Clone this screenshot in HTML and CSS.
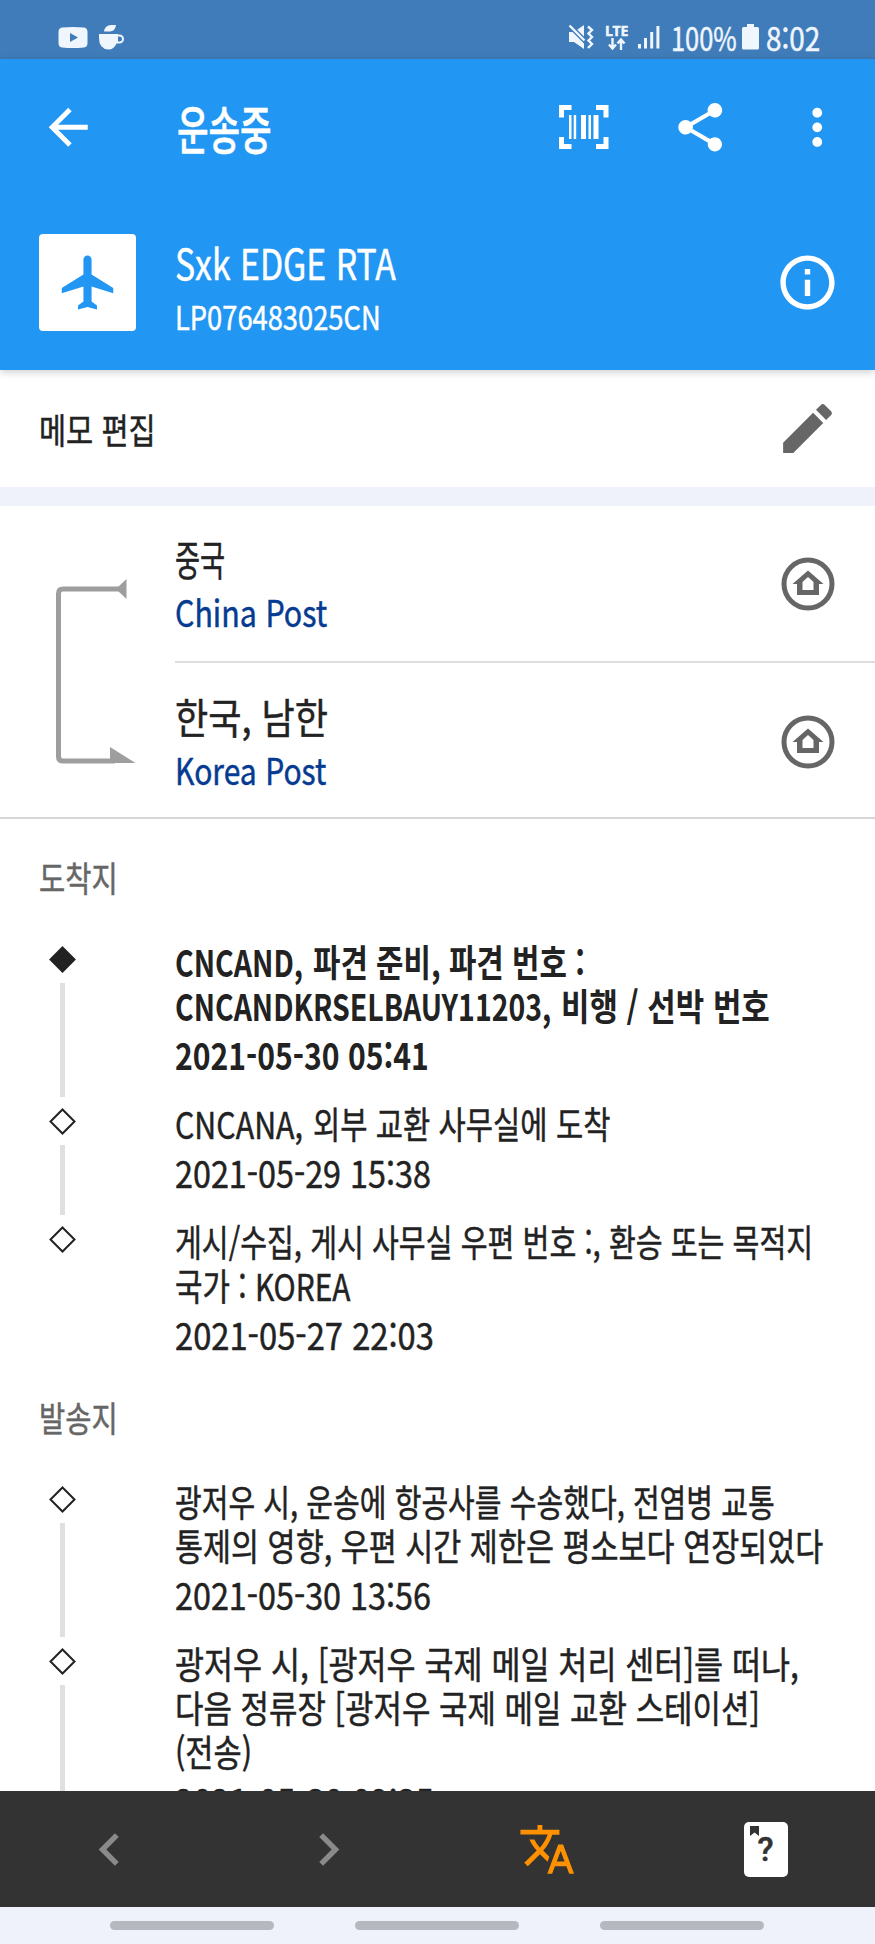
FILE: index.html
```
<!DOCTYPE html>
<html lang="ko">
<head>
    <meta charset="UTF-8">
    <meta name="viewport" content="width=device-width, initial-scale=1.0">
    <title>운송중</title>
    <link rel="stylesheet" href="styles.css">
</head>
<body>
    <!-- Status bar -->
    <div class="status-bar">
        <div class="status-left">
            <svg width="30" height="21" viewBox="0 0 30 21"><path fill-rule="evenodd" d="M4 .5Q15-.5 26 .5 29.500 1 29.500 5V16Q29.500 20 26 20.500 15 21.500 4 20.500 .5 20 .5 16V5Q.5 1 4 .5zM12 6v9l8-4.500z"/></svg>
            <svg width="26" height="25" viewBox="0 0 26 25"><path fill-rule="evenodd" d="M0 9h19v.5h1.500a4.300 4.300 0 0 1 0 9h-3Q15 24.500 9.500 24.500 0 24 0 13zM19 11.500v5h1.500a2.300 2.300 0 0 0 0-5z"/><path d="M5 6.500Q6 0 12 0h5Q16 6.500 11 6.500z"/></svg>
        </div>
        <div class="status-right">
            <svg class="mute" width="26" height="26" viewBox="0 0 26 26"><path d="M1 8h5l10-7v24L6 18H1z"/><path class="mute-gap" d="M0 0l18 18"/><path class="mute-line" d="M1.500 1.500l15 15M20 2.500l4 3.500-3.500 3.500L24 13l-3.500 3.500L24 20l-4 4"/></svg>
            <div class="lte">
                <span>LTE</span>
                <svg width="18" height="12" viewBox="0 0 18 12"><path class="lte-arrows" d="M4.500 0v10M1 6.500l3.500 4 3.500-4M13 12V2M9.500 5.500l3.500-4 3.500 4"/></svg>
            </div>
            <svg class="signal" width="22" height="24" viewBox="0 0 22 24"><path d="M0 19h3v4.500H0zM6 13h3v10.500H6zM12.200 7h3v16.500h-3zM18.400 1h3v22.500h-3z"/></svg>
            <div class="slot battery-text"><span class="fit" data-width="66">100%</span></div>
            <svg class="battery" width="17" height="26" viewBox="0 0 17 26"><path d="M5 0h7v3h3.500a1.500 1.500 0 0 1 1.500 1.500V24a1.500 1.500 0 0 1-1.500 1.500h-14A1.500 1.500 0 0 1 0 24V4.500A1.500 1.500 0 0 1 1.500 3H5z"/></svg>
            <div class="slot clock"><span class="fit" data-width="54">8:02</span></div>
        </div>
    </div>

    <!-- Header -->
    <header class="header">
        <div class="toolbar">
            <svg class="back" width="58.500" height="58.500" viewBox="0 0 24 24"><path d="M20 11H7.830l5.590-5.590L12 4l-8 8 8 8 1.410-1.410L7.830 13H20v-2z"/></svg>
            <h1><span class="fit" data-width="95">운송중</span></h1>
            <div class="actions">
                <svg width="50" height="44" viewBox="0 0 50 44"><path d="M0 0h12.500v5H5v7.500H0zM37 0h12.500v12.500h-5V5H37zM0 32h5v7h7.500v5H0zM44.500 32h5v12H37v-5h7.500zM10 10h2.500v24H10zM14.700 10h2.500v24h-2.500zM22 10h5v24h-5zM29.500 10H32v24h-2.500zM34.500 10h5v24h-5z"/></svg>
                <svg width="58.500" height="58.500" viewBox="0 0 24 24"><path d="M18 16.080c-.76 0-1.440.3-1.960.77L8.910 12.700c.05-.23.09-.46.09-.7s-.04-.47-.09-.7l7.050-4.110c.54.5 1.250.81 2.040.81 1.660 0 3-1.340 3-3s-1.340-3-3-3-3 1.340-3 3c0 .24.04.47.09.7L8.040 9.810C7.500 9.310 6.790 9 6 9c-1.660 0-3 1.340-3 3s1.340 3 3 3c.79 0 1.500-.31 2.040-.81l7.120 4.160c-.05.21-.08.43-.08.65 0 1.610 1.310 2.920 2.920 2.920s2.920-1.310 2.920-2.920-1.310-2.920-2.920-2.920z"/></svg>
                <svg width="58.500" height="58.500" viewBox="0 0 24 24"><path d="M12 8c1.100 0 2-.9 2-2s-.9-2-2-2-2 .9-2 2 .9 2 2 2zm0 2c-1.100 0-2 .9-2 2s.9 2 2 2 2-.9 2-2-.9-2-2-2zm0 6c-1.100 0-2 .9-2 2s.9 2 2 2 2-.9 2-2-.9-2-2-2z"/></svg>
            </div>
        </div>
        <div class="parcel">
            <div class="parcel-icon">
                <svg width="65" height="65" viewBox="0 0 24 24"><path d="M21.500 16v-2l-8-5V3.500c0-.83-.67-1.500-1.500-1.500s-1.500.67-1.500 1.500V9l-8 5v2l8-2.500V19l-2 1.500V22l3.500-1 3.500 1v-1.500L13.500 19v-5.500z"/></svg>
            </div>
            <div class="parcel-text">
                <div class="parcel-name"><span class="fit" data-width="221">Sxk EDGE RTA</span></div>
                <div class="parcel-code"><span class="fit" data-width="206">LP076483025CN</span></div>
            </div>
            <svg width="65" height="65" viewBox="0 0 24 24"><path d="M11 7h2v2h-2zm0 4h2v6h-2zm1-9C6.480 2 2 6.480 2 12s4.480 10 10 10 10-4.480 10-10S17.520 2 12 2zm0 18c-4.410 0-8-3.590-8-8s3.590-8 8-8 8 3.590 8 8-3.590 8-8 8z"/></svg>
        </div>
    </header>

    <!-- Memo -->
    <div class="memo">
        <span class="fit" data-width="117">메모 편집</span>
        <svg width="65" height="65" viewBox="0 0 24 24"><path d="M3 17.250V21h3.750L17.810 9.940l-3.750-3.750L3 17.250zM20.710 7.040c.39-.39.39-1.020 0-1.410l-2.340-2.340c-.39-.39-1.020-.39-1.410 0l-1.830 1.830 3.750 3.750 1.830-1.830z"/></svg>
    </div>

    <!-- Route -->
    <div class="route">
        <svg class="route-line" width="175" height="311" viewBox="0 0 175 311"><path class="route-stroke" d="M121 83H63q-4.500 0-4.500 4.500v163q0 4.500 4.500 4.500h52"/><path d="M118 81l8.500-8v20l-8.500-8zM110 241l25.500 16H110z"/></svg>
        <div class="route-rows">
            <div class="route-row">
                <div class="route-text">
                    <div class="country"><span class="fit" data-width="50">중국</span></div>
                    <div class="carrier"><span class="fit" data-width="152">China Post</span></div>
                </div>
                <svg width="54" height="54" viewBox="0 0 54 54"><circle class="ring" cx="27" cy="27" r="24"/><path fill-rule="evenodd" d="M27 13.500L42.500 27H38v11H16V27h-4.500zM27 20l-5.500 5v8h11v-8z"/></svg>
            </div>
            <div class="route-row">
                <div class="route-text">
                    <div class="country"><span class="fit" data-width="153">한국, 남한</span></div>
                    <div class="carrier"><span class="fit" data-width="151">Korea Post</span></div>
                </div>
                <svg width="54" height="54" viewBox="0 0 54 54"><circle class="ring" cx="27" cy="27" r="24"/><path fill-rule="evenodd" d="M27 13.500L42.500 27H38v11H16V27h-4.500zM27 20l-5.500 5v8h11v-8z"/></svg>
            </div>
        </div>
    </div>

    <!-- Tracking history -->
    <main class="history">
        <h2><span class="fit" data-width="79">도착지</span></h2>
        <div class="event latest">
            <div class="marker"><svg width="27" height="27" viewBox="0 0 27 27"><path d="M13.500 1.500l12 12-12 12-12-12z"/></svg></div>
            <div class="event-text">
                <div><span class="fit" data-width="128">CNCAND,</span> <span class="fit" data-width="272">파견 준비, 파견 번호 :</span></div>
                <div><span class="fit" data-width="376">CNCANDKRSELBAUY11203,</span> <span class="fit" data-width="209">비행 / 선박 번호</span></div>
                <div class="date"><span class="fit" data-width="254">2021-05-30 05:41</span></div>
            </div>
        </div>
        <div class="event">
            <div class="marker"><svg width="27" height="27" viewBox="0 0 27 27"><path d="M13.500 1.500l12 12-12 12-12-12z"/></svg></div>
            <div class="event-text">
                <div><span class="fit" data-width="128">CNCANA,</span> <span class="fit" data-width="297">외부 교환 사무실에 도착</span></div>
                <div class="date"><span class="fit" data-width="256">2021-05-29 15:38</span></div>
            </div>
        </div>
        <div class="event last">
            <div class="marker"><svg width="27" height="27" viewBox="0 0 27 27"><path d="M13.500 1.500l12 12-12 12-12-12z"/></svg></div>
            <div class="event-text">
                <div><span class="fit" data-width="638">게시/수집, 게시 사무실 우편 번호 :, 환승 또는 목적지</span></div>
                <div><span class="fit" data-width="175">국가 : KOREA</span></div>
                <div class="date"><span class="fit" data-width="259">2021-05-27 22:03</span></div>
            </div>
        </div>

        <h2><span class="fit" data-width="79">발송지</span></h2>
        <div class="event">
            <div class="marker"><svg width="27" height="27" viewBox="0 0 27 27"><path d="M13.500 1.500l12 12-12 12-12-12z"/></svg></div>
            <div class="event-text">
                <div><span class="fit" data-width="600">광저우 시, 운송에 항공사를 수송했다, 전염병 교통</span></div>
                <div><span class="fit" data-width="648">통제의 영향, 우편 시간 제한은 평소보다 연장되었다</span></div>
                <div class="date"><span class="fit" data-width="256">2021-05-30 13:56</span></div>
            </div>
        </div>
        <div class="event">
            <div class="marker"><svg width="27" height="27" viewBox="0 0 27 27"><path d="M13.500 1.500l12 12-12 12-12-12z"/></svg></div>
            <div class="event-text">
                <div><span class="fit" data-width="624">광저우 시, [광저우 국제 메일 처리 센터]를 떠나,</span></div>
                <div><span class="fit" data-width="585">다음 정류장 [광저우 국제 메일 교환 스테이션]</span></div>
                <div><span class="fit" data-width="77">(전송)</span></div>
                <div class="date"><span class="fit" data-width="259">2021-05-30 09:35</span></div>
            </div>
        </div>
    </main>

    <!-- Bottom bar -->
    <nav class="tabs">
        <div class="tab"><svg width="65" height="65" viewBox="0 0 24 24"><path d="M15.410 7.410L14 6l-6 6 6 6 1.410-1.410L10.830 12z"/></svg></div>
        <div class="tab"><svg width="65" height="65" viewBox="0 0 24 24"><path d="M10 6L8.590 7.410 13.170 12l-4.580 4.590L10 18l6-6z"/></svg></div>
        <div class="tab active"><svg width="58.500" height="58.500" viewBox="0 0 24 24"><path d="M12.870 15.070l-2.540-2.510.03-.03c1.740-1.940 2.980-4.170 3.710-6.530H17V4h-7V2H8v2H1v1.990h11.170C11.500 7.920 10.440 9.750 9 11.350 8.070 10.320 7.300 9.190 6.690 8h-2c.73 1.630 1.730 3.170 2.980 4.560l-5.090 5.020L4 19l5-5 3.110 3.110.76-2.040zM18.500 10h-2L12 22h2l1.120-3h4.750L21 22h2l-4.500-12zm-2.620 7l1.620-4.330L19.120 17h-3.240z"/></svg></div>
        <div class="tab">
            <div class="help-book">
                <svg width="9" height="10" viewBox="0 0 9 10"><path d="M0 0h9v10l-4.500-3.500L0 10z"/></svg>
                <span>?</span>
            </div>
        </div>
    </nav>
    <div class="gesture-bar"><i></i><i></i><i></i></div>

    <script>
        // Condense each text run to its column width
        document.querySelectorAll('.fit').forEach((el) => {
            const width = Number(el.dataset.width);
            const scale = width / el.offsetWidth;
            el.style.width = `${width}px`;
            el.style.transform = `scaleX(${scale})`;
        });
    </script>
</body>
</html>
```
FILE: styles.css
```
:root {
    --primary-color: #2196f3;
    --status-color: #3f7cb9;
    --text: #222222;
    --icon: #666666;
    --background: #eff2fb;
}

* {
    box-sizing: border-box;
}

body {
    margin: 0;
    height: 1944px;
    display: flex;
    flex-direction: column;
    overflow: hidden;
    background: white;
    color: var(--text);
    font-family: "Noto Sans CJK KR", "Noto Sans", sans-serif;
    -webkit-text-stroke: 0.5px currentColor;
}

svg {
    display: block;
    flex: none;
    fill: currentColor;
}

h1, h2 {
    margin: 0;
    font-weight: 400;
}

.fit {
    display: inline-block;
    white-space: nowrap;
    transform-origin: left center;
}

/* Status bar */
.status-bar {
    flex: none;
    height: 59px;
    padding: 15px 55px 0 58px;
    display: flex;
    justify-content: space-between;
    background: var(--status-color);
    color: #f0f6fd;
}

.status-left, .status-right {
    height: 44px;
    display: flex;
    align-items: center;
}

.status-left {
    gap: 11px;
}

.mute {
    margin-right: 11px;
}

.mute-gap, .mute-line, .lte-arrows, .ring, .route-stroke {
    fill: none;
}

.mute-gap {
    stroke: var(--status-color);
    stroke-width: 5;
}

.mute-line, .lte-arrows {
    stroke: currentColor;
    stroke-width: 2.4;
}

.lte {
    width: 26px;
    margin-right: 7px;
    font: 700 14px/13px "Open Sans", sans-serif;
    letter-spacing: -0.3px;
}

.lte svg {
    margin: 1px 0 0 3px;
}

.signal {
    margin-right: 11px;
}

.slot {
    height: 30px;
    font-size: 32px;
    line-height: 30px;
}

.battery-text {
    width: 66px;
    margin-right: 5px;
}

.battery {
    margin-right: 7px;
}

.clock {
    width: 54px;
}

/* Header */
.header {
    flex: none;
    height: 311px;
    background: var(--primary-color);
    color: white;
    box-shadow: 0 2px 8px rgba(0, 0, 0, 0.2);
    z-index: 1;
}

.toolbar {
    height: 136px;
    padding: 0 29px 0 39px;
    display: flex;
    align-items: center;
}

.toolbar h1 {
    margin-left: 79px;
    padding-top: 2px;
    font-size: 52px;
    font-weight: 500;
    line-height: 60px;
}

.toolbar .actions {
    margin-left: auto;
    display: flex;
    align-items: center;
    gap: 58px;
}

.toolbar .actions svg:first-child {
    margin-right: 4px;
}

.parcel {
    height: 175px;
    padding: 0 35px 0 39px;
    display: flex;
    align-items: center;
}

.parcel-icon {
    width: 97px;
    height: 97px;
    margin-right: 39px;
    display: flex;
    align-items: center;
    justify-content: center;
    border-radius: 4px;
    background: white;
    color: var(--primary-color);
}

.parcel-text, .route-text {
    flex: 1;
}

.parcel-text {
    padding-top: 8px;
}

.parcel-name {
    font-size: 42px;
    line-height: 58px;
}

.parcel-code {
    font-size: 33px;
    line-height: 50px;
}

/* Memo */
.memo {
    flex: none;
    height: 136px;
    padding: 0 35px 0 39px;
    display: flex;
    align-items: center;
    justify-content: space-between;
    border-bottom: 19px solid var(--background);
    font-size: 35px;
}

.memo svg, .route-row svg {
    color: var(--icon);
}

/* Route */
.route {
    flex: none;
    height: 313px;
    display: flex;
    border-bottom: 2px solid #d6d6d6;
}

.route-line {
    color: #9e9e9e;
}

.route-stroke, .ring {
    stroke: currentColor;
    stroke-width: 5;
}

.route-rows {
    flex: 1;
}

.route-row {
    height: 157px;
    padding-right: 40px;
    display: flex;
    align-items: center;
}

.route-row:first-child {
    border-bottom: 2px solid #dedede;
}

.country {
    font-size: 42px;
    line-height: 54px;
}

.carrier {
    font-size: 37px;
    line-height: 52px;
    color: #063b91;
}

/* History */
.history {
    flex: 1;
    min-height: 0;
    overflow: hidden;
}

.history h2 {
    height: 120px;
    padding-left: 39px;
    font-size: 35px;
    line-height: 116px;
    color: var(--icon);
}

.event {
    display: flex;
    font-size: 37px;
    line-height: 44px;
    padding-left: 48.5px;
}

.event-text {
    padding-bottom: 25px;
}

.date {
    margin-top: 5px;
}

.marker {
    width: 27px;
    margin-right: 99.5px;
    display: flex;
    flex-direction: column;
    align-items: center;
    gap: 10px;
    padding: 7px 0 4.5px;
}

.marker svg {
    fill: white;
    stroke: var(--text);
    stroke-width: 2;
}

.marker::after {
    content: "";
    flex: 1;
    width: 5px;
    background: #e0e0e0;
}

.latest {
    font-weight: 700;
    -webkit-text-stroke: 0;
}

.latest .marker svg {
    fill: var(--text);
}

.last .marker::after {
    display: none;
}

.last .event-text {
    padding-bottom: 3px;
}

/* Bottom bar */
.tabs {
    flex: none;
    height: 116px;
    display: flex;
    background: #333333;
}

.tab {
    flex: 1;
    display: flex;
    align-items: center;
    justify-content: center;
    color: #8a8a8a;
}

.tab.active {
    color: #ff9100;
}

.help-book {
    width: 44px;
    height: 55px;
    padding: 4px 6px;
    border-radius: 5px;
    background: white;
    color: #333333;
    font: 500 33px/28px Roboto, sans-serif;
}

.help-book span {
    display: block;
    text-align: center;
}

.gesture-bar {
    flex: none;
    height: 37px;
    display: flex;
    gap: 81px;
    padding: 14px 0 0 110px;
    background: var(--background);
}

.gesture-bar i {
    width: 164px;
    height: 9px;
    border-radius: 5px;
    background: #b5b8be;
}
```
